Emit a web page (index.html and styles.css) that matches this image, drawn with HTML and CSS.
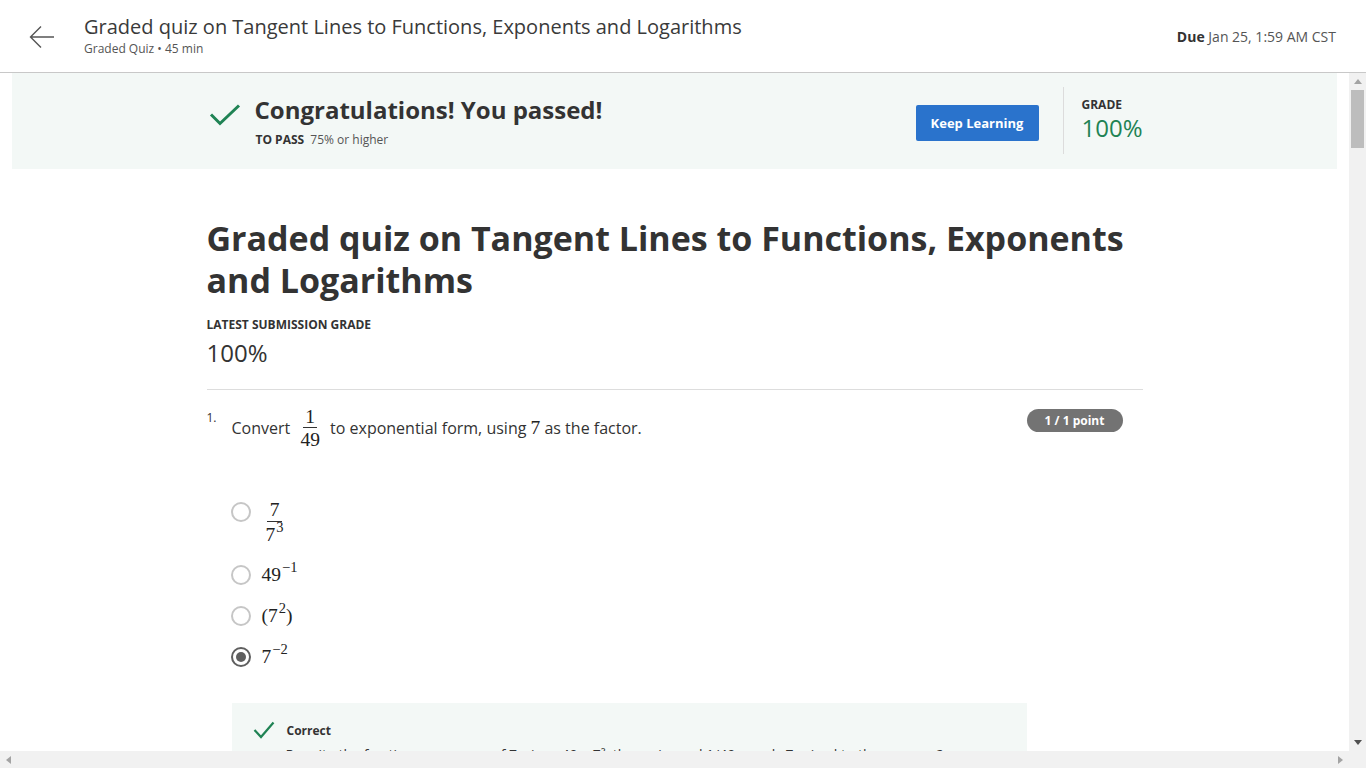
FILE: index.html
```html
<!DOCTYPE html>
<html lang="en">
<head>
<meta charset="utf-8">
<title>Graded quiz on Tangent Lines to Functions, Exponents and Logarithms</title>
<link rel="stylesheet" href="styles.css">
</head>
<body>
<header class="topbar">
  <button class="back" aria-label="Back">
    <svg width="26" height="24" viewBox="0 0 26 24"><path d="M25 12H2M12 1.5L1.5 12L12 22.5" fill="none" stroke="#555" stroke-width="1.4"/></svg>
  </button>
  <div class="top-title">
    <div class="top-name">Graded quiz on Tangent Lines to Functions, Exponents and Logarithms</div>
    <div class="top-meta">Graded Quiz • 45 min</div>
  </div>
  <div class="due"><b>Due</b> Jan 25, 1:59 AM CST</div>
</header>
<div class="frame">
  <main class="scroller">
    <section class="banner">
      <div class="banner-inner">
        <svg class="pass-check" width="32" height="22" viewBox="0 0 32 22"><path d="M2 10.5L11 19.5L30 1.5" fill="none" stroke="#1f8354" stroke-width="3"/></svg>
        <div class="pass-text">
          <div class="pass-head">Congratulations! You passed!</div>
          <div class="pass-sub"><b>TO PASS</b> 75% or higher</div>
        </div>
        <button class="keep">Keep Learning</button>
        <div class="grade-box">
          <div class="grade-label">GRADE</div>
          <div class="grade-val">100%</div>
        </div>
      </div>
    </section>
    <section class="content">
      <h1 class="quiz-title">Graded quiz on Tangent Lines to Functions, Exponents and Logarithms</h1>
      <div class="latest-label">LATEST SUBMISSION GRADE</div>
      <div class="latest-val">100%</div>
      <div class="question">
        <div class="q-head">
          <span class="q-num">1.</span>
          <div class="q-text">Convert <span class="frac m"><span class="num">1</span><span class="den">49</span></span> to exponential form, using <span class="m">7</span> as the factor.</div>
          <span class="badge">1 / 1 point</span>
        </div>
        <div class="options">
          <div class="opt opt-tall"><span class="radio"></span><span class="frac m big"><span class="num">7</span><span class="den">7<sup>3</sup></span></span></div>
          <div class="opt"><span class="radio"></span><span class="m">49<sup>−1</sup></span></div>
          <div class="opt"><span class="radio"></span><span class="m">(7<sup>2</sup>)</span></div>
          <div class="opt"><span class="radio on"></span><span class="m">7<sup>−2</sup></span></div>
        </div>
        <div class="feedback">
          <div class="fb-head">
            <svg width="22" height="18" viewBox="0 0 22 18"><path d="M1.5 9L8 16L20.5 1.5" fill="none" stroke="#1f8354" stroke-width="2.2"/></svg>
            <span>Correct</span>
          </div>
          <p class="fb-text">Rewrite the fraction as a power of 7: since 49 = 7², the reciprocal 1/49 equals 7 raised to the power −2.</p>
        </div>
      </div>
    </section>
  </main>
  <div class="vbar">
    <span class="sb-btn"><svg width="8" height="5" viewBox="0 0 8 5"><path d="M0 5L4 0L8 5Z" fill="#a3a3a3"/></svg></span>
    <div class="vtrack"><div class="vthumb"></div></div>
    <span class="sb-btn"><svg width="8" height="5" viewBox="0 0 8 5"><path d="M0 0L4 5L8 0Z" fill="#505050"/></svg></span>
  </div>
  <div class="hbar">
    <span class="sb-btn"><svg width="5" height="8" viewBox="0 0 5 8"><path d="M5 0L0 4L5 8Z" fill="#a3a3a3"/></svg></span>
    <div class="htrack"></div>
    <span class="sb-btn"><svg width="5" height="8" viewBox="0 0 5 8"><path d="M0 0L5 4L0 8Z" fill="#a3a3a3"/></svg></span>
  </div>
  <div class="corner"></div>
</div>
</body>
</html>
```
FILE: styles.css
```css
* { box-sizing: border-box; }
html, body { margin: 0; height: 100%; overflow: hidden; }
body {
  font-family: "Open Sans", "Noto Sans", sans-serif;
  color: #333;
  background: #fff;
}
.topbar {
  height: 73px;
  display: flex;
  align-items: center;
  border-bottom: 1px solid #c8c8c8;
}
.back {
  width: 84px;
  height: 72px;
  border: 0;
  background: none;
  padding: 0 0 0 29px;
  display: flex;
  align-items: center;
  margin-top: 1px;
}
.top-title { flex: 1; margin-top: -2px; }
.top-name { font-size: 20px; line-height: 28px; color: #3a3a3a; }
.top-meta { font-size: 12px; line-height: 16px; color: #555; }
.due { font-size: 14px; color: #555; padding-right: 30px; }
.due b { color: #333; font-weight: 700; }

.frame {
  display: grid;
  grid-template-columns: 1fr 17px;
  grid-template-rows: 678px 17px;
}
.scroller { overflow: hidden; min-width: 0; }
.vbar, .hbar, .corner { background: #f1f1f1; }
.vbar { display: flex; flex-direction: column; }
.hbar { display: flex; }
.sb-btn { width: 17px; height: 17px; flex: none; display: flex; align-items: center; justify-content: center; }
.vtrack { flex: 1; padding: 0 2px; }
.vthumb { height: 58px; background: #bdbdbd; }
.htrack { flex: 1; }

.banner {
  margin: 0 12px;
  height: 96px;
  background: #f3f8f6;
}
.banner-inner {
  width: 936px;
  margin: 0 auto;
  height: 96px;
  display: flex;
  align-items: center;
  padding-left: 2px;
}
.pass-check { margin-right: 14px; margin-top: -12px; }
.pass-text { flex: 1; }
.pass-head { font-size: 24px; font-weight: 700; line-height: 32px; color: #333; }
.pass-sub { font-size: 12px; line-height: 18px; color: #555; margin-top: 5px; padding-left: 1px; }
.pass-sub b { color: #333; margin-right: 3px; }
.keep {
  width: 123px;
  height: 36px;
  background: #2a73cc;
  color: #fff;
  border: 0;
  border-radius: 2px;
  font-family: inherit;
  font-size: 13px;
  font-weight: 700;
  margin-top: 4px;
}
.grade-box {
  margin-left: 24px;
  border-left: 1px solid #dcdcdc;
  height: 67px;
  padding-left: 18px;
  width: 80px;
  margin-top: -2px;
}
.grade-label { font-size: 12px; font-weight: 700; line-height: 14px; color: #333; margin-top: 11px; }
.grade-val { font-size: 24px; line-height: 22px; margin-top: 5px; color: #1f8354; }

.content { width: 936px; margin: 0 auto; padding-top: 48px; }
.quiz-title {
  margin: 0;
  font-size: 34px;
  line-height: 42px;
  font-weight: 700;
  color: #333;
}
.latest-label { font-size: 12px; font-weight: 700; line-height: 16px; margin-top: 16px; }
.latest-val { font-size: 24px; line-height: 32px; font-weight: 400; margin-top: 4px; padding-bottom: 20px; border-bottom: 1px solid #ddd; }

.m { font-family: "Liberation Serif", "DejaVu Serif", serif; font-size: 19.5px; color: #222; }
.m sup { font-size: 14.5px; line-height: 0; vertical-align: 0; position: relative; top: -9px; margin-left: 1px; }
.frac { display: inline-flex; flex-direction: column; align-items: center; vertical-align: middle; margin: 0 6px; }
.frac .num { border-bottom: 1.5px solid #333; padding: 0 2px; line-height: 20px; }
.frac .den { line-height: 24px; }

.question { padding-top: 17px; }
.q-head { display: flex; align-items: flex-start; }
.q-num { font-size: 12px; width: 25px; padding-top: 2px; color: #333; }
.q-text { flex: 1; font-size: 16px; color: #333; line-height: 24px; }
.badge {
  background: #737373;
  color: #fff;
  font-size: 12px;
  font-weight: 700;
  border-radius: 12px;
  height: 23px;
  line-height: 23px;
  width: 96px;
  text-align: center;
  margin-right: 20px;
  margin-top: 2px;
}
.options { padding-left: 24px; padding-top: 47px; }
.opt { display: flex; align-items: flex-start; height: 26px; margin-bottom: 15px; }
.opt-tall { height: 50px; margin-bottom: 13px; }
.opt .radio {
  width: 20px;
  height: 20px;
  border: 2px solid #c6c6c6;
  border-radius: 50%;
  margin-top: 3px;
  margin-right: 10px;
  flex: none;
  display: flex;
  align-items: center;
  justify-content: center;
}
.opt .radio.on { border-color: #5f5f5f; }
.opt .radio.on::after { content: ""; width: 10px; height: 10px; border-radius: 50%; background: #5f5f5f; }
.opt .m { line-height: 26px; padding-left: 1px; }
.opt .frac { margin: 0 0 0 4px; }
.opt .frac .num { line-height: 22px; padding: 0 3px; }
.opt .frac .den { line-height: 26px; }

.feedback {
  margin: 33px 116px 0 25px;
  background: #f3f8f6;
  padding: 18px 20px 20px 21px;
}
.fb-head { display: flex; align-items: center; gap: 12px; font-size: 12px; font-weight: 700; color: #333; }
.fb-text { margin: 6px 0 0 33px; font-size: 14px; color: #333; }
```
